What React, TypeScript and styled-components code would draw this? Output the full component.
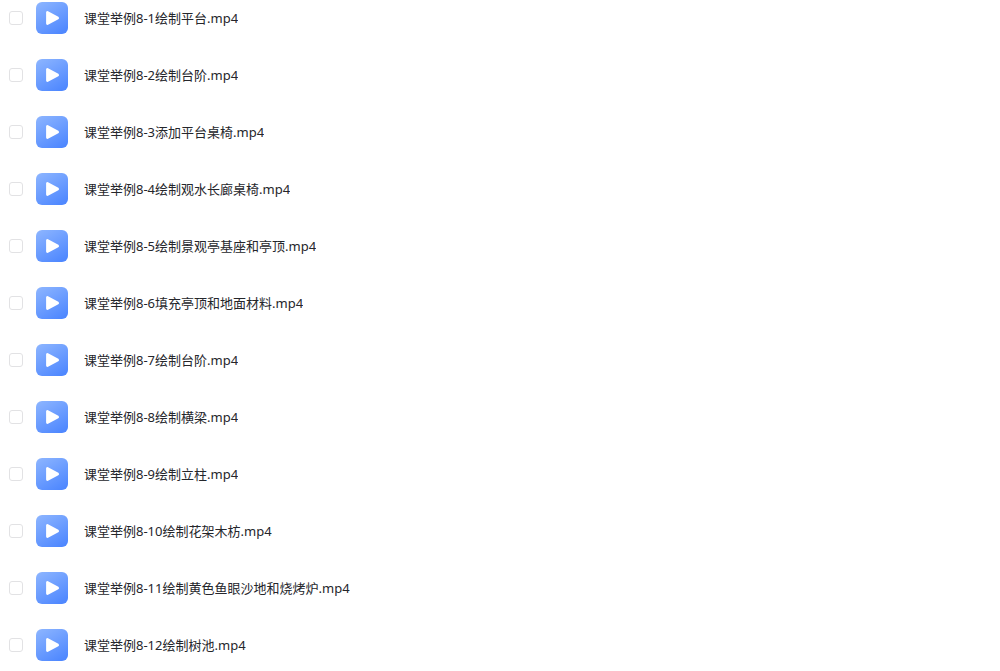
import React from "react";
import styled, { createGlobalStyle } from "styled-components";

const GlobalStyle = createGlobalStyle`
  * { box-sizing: border-box; }
  body {
    margin: 0;
    background: #fff;
    color: #25262b;
    font-family: "Noto Sans", "Noto Sans CJK SC", sans-serif;
    font-size: 13px;
    line-height: 20px;
  }
`;

const FileList = styled.ul`
  display: flex;
  flex-direction: column;
  gap: 25px;
  margin: 0;
  padding: 2px 9px 10px;
  list-style: none;
`;

const FileRow = styled.li`
  display: flex;
  align-items: center;
  height: 32px;
`;

const Checkbox = styled.input`
  appearance: none;
  flex: none;
  width: 14px;
  height: 14px;
  margin: 0 13px 0 0;
  border: 1px solid #e2e2e4;
  border-radius: 3px;
  background: #fff;
  cursor: pointer;

  &:checked {
    border-color: #4f86ff;
    background: #4f86ff;
  }
`;

const FileLabel = styled.label`
  display: flex;
  align-items: center;
  gap: 16px;
  min-width: 0;
  cursor: pointer;
`;

const Icon = styled.svg`
  flex: none;
  width: 32px;
  height: 32px;
`;

const FileName = styled.span`
  overflow: hidden;
  text-overflow: ellipsis;
  white-space: nowrap;
`;

const files = [
  "课堂举例8-1绘制平台.mp4",
  "课堂举例8-2绘制台阶.mp4",
  "课堂举例8-3添加平台桌椅.mp4",
  "课堂举例8-4绘制观水长廊桌椅.mp4",
  "课堂举例8-5绘制景观亭基座和亭顶.mp4",
  "课堂举例8-6填充亭顶和地面材料.mp4",
  "课堂举例8-7绘制台阶.mp4",
  "课堂举例8-8绘制横梁.mp4",
  "课堂举例8-9绘制立柱.mp4",
  "课堂举例8-10绘制花架木枋.mp4",
  "课堂举例8-11绘制黄色鱼眼沙地和烧烤炉.mp4",
  "课堂举例8-12绘制树池.mp4",
];

function VideoIcon({ id }: { id: string }) {
  return (
    <Icon viewBox="0 0 32 32" aria-hidden="true">
      <defs>
        <linearGradient id={id} x1="0.15" y1="0" x2="0.75" y2="1">
          <stop offset="0" stopColor="#8ab3ff" />
          <stop offset="1" stopColor="#4f88ff" />
        </linearGradient>
      </defs>
      <rect width="32" height="32" rx="6" fill={`url(#${id})`} />
      <path
        d="M11.4 10.4v11.2L21.7 16z"
        fill="#fff"
        stroke="#fff"
        strokeWidth="2.6"
        strokeLinejoin="round"
      />
    </Icon>
  );
}

export default function App() {
  return (
    <>
      <GlobalStyle />
      <FileList>
        {files.map((name, i) => (
          <FileRow key={name}>
            <Checkbox type="checkbox" id={`file-${i}`} />
            <FileLabel htmlFor={`file-${i}`}>
              <VideoIcon id={`video-fill-${i}`} />
              <FileName>{name}</FileName>
            </FileLabel>
          </FileRow>
        ))}
      </FileList>
    </>
  );
}
